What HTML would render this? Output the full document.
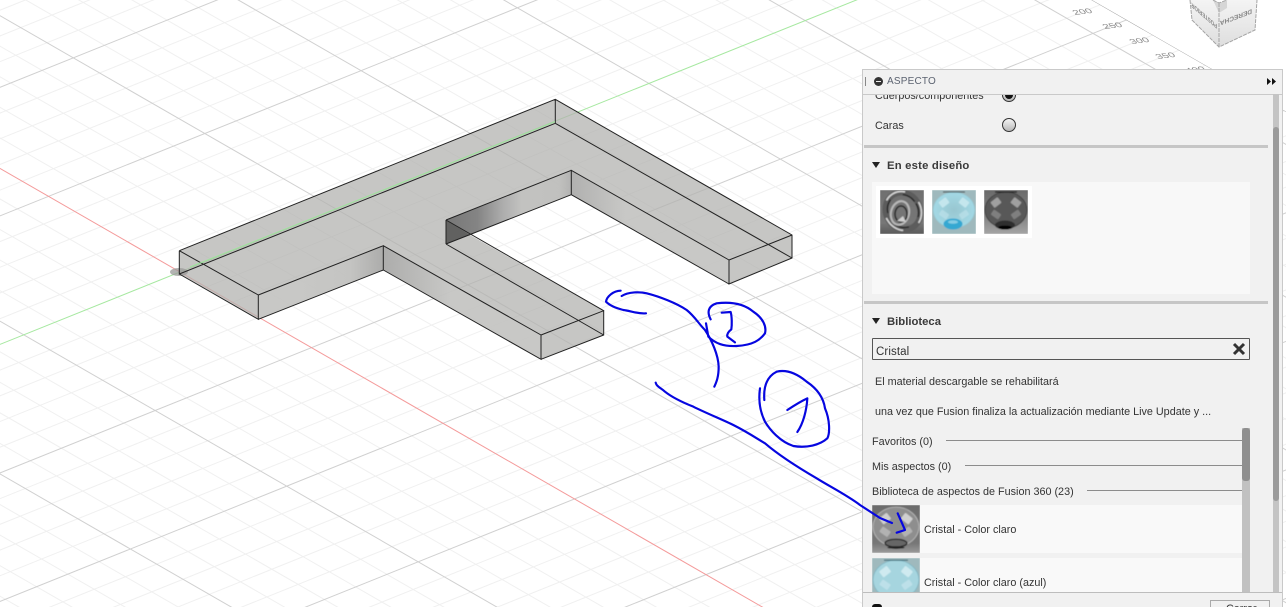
<!DOCTYPE html>
<html lang="es"><head><meta charset="utf-8"><title>ASPECTO</title>
<style>
html,body{margin:0;padding:0;width:1286px;height:607px;overflow:hidden;background:#fff;font-family:"Liberation Sans",Arial,sans-serif}
.a{position:absolute}
#stage{position:absolute;left:0;top:0;width:1286px;height:607px;overflow:hidden}
#panel{position:absolute;left:862px;top:69px;width:419px;height:537px;background:#f1f1f1;border:1px solid #c9c9c9;border-bottom:0;box-sizing:content-box;overflow:hidden}
.t{position:absolute;font-size:10.8px;line-height:12px;color:#333;white-space:nowrap}
.b{font-weight:bold;font-size:11.3px;color:#3a3a3a}
.sep{position:absolute;left:1px;width:404px;height:3px;background:#c6c6c6}
.ln{position:absolute;height:1px;background:#8c8c8c}
.radio{position:absolute;width:12px;height:12px;border:1px solid #333;border-radius:50%;background:linear-gradient(#f4f4f4,#b9b9b9)}
.tri{position:absolute;width:0;height:0;border-left:4.5px solid transparent;border-right:4.5px solid transparent;border-top:6px solid #222}
</style></head><body>
<div id="stage">
<svg class="a" style="left:0;top:0" width="1286" height="607" viewBox="0 0 1286 607">
<defs>
<clipPath id="gc"><polygon points="0,0 1092,0 1286,111.6 1286,607 0,607"/></clipPath>
<linearGradient id="w1" gradientUnits="userSpaceOnUse" x1="446" y1="0" x2="572" y2="0"><stop offset="0" stop-color="#6f6f6f"/><stop offset=".25" stop-color="#7d7d7d"/><stop offset=".45" stop-color="#aaaaaa"/><stop offset=".6" stop-color="#c2c2c0"/><stop offset=".9" stop-color="#c0c0be"/><stop offset="1" stop-color="#b0b0af"/></linearGradient>
<linearGradient id="w2" gradientUnits="userSpaceOnUse" x1="300" y1="0" x2="383" y2="0"><stop offset="0" stop-color="#c8c8c6"/><stop offset=".6" stop-color="#c4c4c2"/><stop offset="1" stop-color="#a8a8a7"/></linearGradient>
<linearGradient id="w3" gradientUnits="userSpaceOnUse" x1="383" y1="0" x2="450" y2="0"><stop offset="0" stop-color="#a8a8a7"/><stop offset="1" stop-color="#c8c8c6"/></linearGradient>
<linearGradient id="w4" gradientUnits="userSpaceOnUse" x1="572" y1="0" x2="625" y2="0"><stop offset="0" stop-color="#adadac"/><stop offset="1" stop-color="#c8c8c6"/></linearGradient>
<linearGradient id="cl" x1="0" y1="0" x2="0" y2="1"><stop offset="0" stop-color="#f4f4f4"/><stop offset="1" stop-color="#dedede"/></linearGradient>
</defs>
<g clip-path="url(#gc)" fill="none">
<g transform="matrix(26.3 15.13 31.26 -12.57 180 272)">
<path vector-effect="non-scaling-stroke" stroke="#f0f0f0" stroke-width="1" d="M-14-18V26.08M-13-18V26.08M-12-18V26.08M-11-18V26.08M-9-18V26.08M-8-18V26.08M-7-18V26.08M-6-18V26.08M-4-18V26.08M-3-18V26.08M-2-18V26.08M-1-18V26.08M1-18V26.08M2-18V26.08M3-18V26.08M4-18V26.08M6-18V26.08M7-18V26.08M8-18V26.08M9-18V26.08M11-18V26.08M12-18V26.08M13-18V26.08M14-18V26.08M16-18V26.08M17-18V26.08M18-18V26.08M19-18V26.08M21-18V26.08M22-18V26.08M23-18V26.08M24-18V26.08M26-18V26.08M27-18V26.08M28-18V26.08M29-18V26.08M31-18V26.08M-14-18H31M-14-17H31M-14-16H31M-14-14H31M-14-13H31M-14-12H31M-14-11H31M-14-9H31M-14-8H31M-14-7H31M-14-6H31M-14-4H31M-14-3H31M-14-2H31M-14-1H31M-14 1H31M-14 2H31M-14 3H31M-14 4H31M-14 6H31M-14 7H31M-14 8H31M-14 9H31M-14 11H31M-14 12H31M-14 13H31M-14 14H31M-14 16H31M-14 17H31M-14 18H31M-14 19H31M-14 21H31M-14 22H31M-14 23H31M-14 24H31"/>
<path vector-effect="non-scaling-stroke" stroke="#d0d0d0" stroke-width="1" d="M-10-18V26.08M-5-18V26.08M5-18V26.08M10-18V26.08M15-18V26.08M20-18V26.08M25-18V26.08M30-18V26.08M-14-15H31M-14-10H31M-14-5H31M-14 5H31M-14 10H31M-14 15H31M-14 20H31M-14 25H31"/>
<path vector-effect="non-scaling-stroke" stroke="#8d8d8d" stroke-width="1" d="M-14 26.08H31"/>
<path vector-effect="non-scaling-stroke" stroke="#f49a9a" stroke-width="1" d="M-14 0H31"/>
<path vector-effect="non-scaling-stroke" stroke="#a6e8a0" stroke-width="1" d="M0-18V26.08"/>
</g>
</g>
<!-- axis labels -->
<g font-family="'Liberation Sans',sans-serif" font-size="11" fill="#8c8c8c">
<text transform="matrix(1 -.12 .5 .6 1075 15)">200</text>
<text transform="matrix(1 -.12 .5 .6 1105 29)">250</text>
<text transform="matrix(1 -.12 .5 .6 1132 44)">300</text>
<text transform="matrix(1 -.12 .5 .6 1158 59)">350</text>
<text transform="matrix(1 -.12 .5 .6 1188 73)">400</text>
</g>
<!-- nav cube -->
<g>
<polygon points="1190,0 1192,20 1219,47 1219,8 1213,0" fill="url(#cl)"/>
<polygon points="1219,8 1219,47 1255,30 1257,0 1227,0" fill="url(#cl)"/>
<polygon points="1213,0 1219,3 1227,0 1227,8 1219,13" fill="#d6d6d6"/>
<path d="M1190 0L1192 20L1219 47L1255 30L1257 0M1219 3V47M1213 0L1219 3L1227 0" fill="none" stroke="#a4a4a4" stroke-width="1" stroke-dasharray="4 1"/>
<g font-family="'Liberation Sans',sans-serif" font-size="6.5" font-weight="bold" fill="#858585">
<text transform="matrix(-1 .38 0 -1 1252 9)">DERECHA</text>
<text transform="matrix(-.67 -.58 0 -1 1217 24.5)">POSTERIOR</text>
</g>
</g>
<!-- body -->
<polygon points="179.3,250.7 555.3,99.3 792,235 792,258 729,284 571.3,194.7 470,235 603.7,310.7 603.7,335 541,359.3 383.3,270 258.3,319.3 179.3,274" fill="#b2b2b0" fill-opacity=".74"/>
<polygon points="446,220 571.3,170.3 571.3,194.7 446,244" fill="url(#w1)" fill-opacity=".9"/>
<polygon points="446,220 470,235 446,244" fill="#616160"/>
<polygon points="258.3,295 383.3,245.7 383.3,270 258.3,319.3" fill="url(#w2)" fill-opacity=".85"/>
<polygon points="383.3,245.7 541,335 541,359.3 383.3,270" fill="url(#w3)" fill-opacity=".85"/>
<polygon points="571.3,170.3 729,260 729,284 571.3,194.7" fill="url(#w4)" fill-opacity=".85"/>
<ellipse cx="179" cy="272" rx="9" ry="4" fill="#9a9a98" fill-opacity=".75"/>
<path fill="none" stroke="#222" stroke-width="1" d="M179.3 250.7L555.3 99.3L792 235V258L729 284V260L792 235M729 284L571.3 194.7V170.3L729 260M555.3 99.3V123.3L792 258M179.3 250.7V274L555.3 123.3M179.3 250.7L258.3 295V319.3L179.3 274M258.3 295L383.3 245.7V270L258.3 319.3M383.3 245.7L541 335V359.3L383.3 270M541 335L603.7 310.7V335L541 359.3M446 220L603.7 310.7M446 244L603.7 335M446 220V244M446 220L571.3 170.3M446 244L571.3 194.7"/>
<line x1="190" y1="267" x2="555" y2="121.6" stroke="#9ce59a" stroke-width="1"/>
</svg>

<div id="panel">
<div class="t" style="left:12px;top:20px;">Cuerpos/componentes</div>
<div class="radio" style="left:139px;top:18px"></div>
<div class="a" style="left:142px;top:21px;width:8px;height:8px;border-radius:50%;background:#111"></div>
<div class="a" style="left:0;top:0;width:419px;height:24px;background:#f1f1f1;border-bottom:1px solid #c9c9c9"></div>
<div class="a" style="left:2px;top:7px;width:1px;height:9px;background:#888"></div>
<div class="a" style="left:11px;top:7px;width:9px;height:9px;border-radius:50%;background:#333"></div>
<div class="a" style="left:13px;top:11px;width:5px;height:1px;background:#eee"></div>
<div class="t" style="left:24px;top:6px;color:#5b6270;font-size:10px;letter-spacing:.2px;">ASPECTO</div>
<svg class="a" style="left:403px;top:7px" width="12" height="9"><path d="M1 1l4 3.5l-4 3.5zM6 1l4 3.5l-4 3.5z" fill="#111"/></svg>

<div class="t" style="left:12px;top:50px;">Caras</div>
<div class="radio" style="left:139px;top:48px"></div>
<div class="sep" style="top:75px"></div>
<div class="tri" style="left:9px;top:92px"></div>
<div class="t b" style="left:24px;top:90px;letter-spacing:.2px">En este diseño</div>
<div class="a" style="left:9px;top:112px;width:378px;height:112px;background:#f8f8f8"></div>
<div class="a" style="left:13px;top:116px;width:156px;height:52px;background:#fff"></div>
<div class="sep" style="top:231px"></div>
<div class="tri" style="left:9px;top:248px"></div>
<div class="t b" style="left:24px;top:246px;">Biblioteca</div>
<div class="a" style="left:9px;top:268px;width:376px;height:20px;border:1px solid #555;border-radius:1px"></div>
<div class="t" style="left:13px;top:276px;font-size:11.5px;letter-spacing:.1px;">Cristal</div>
<svg class="a" style="left:369px;top:272px" width="14" height="14"><path d="M2 2L12 12M12 2L2 12" stroke="#333" stroke-width="3" fill="none"/></svg>
<div class="t" style="left:12px;top:306px;">El material descargable se rehabilitará</div>
<div class="t" style="left:12px;top:336px;">una vez que Fusion finaliza la actualización mediante Live Update y ...</div>

<div class="t" style="left:9px;top:366px;">Favoritos (0)</div>
<div class="ln" style="left:83px;top:370px;width:296px"></div>
<div class="t" style="left:9px;top:391px;">Mis aspectos (0)</div>
<div class="ln" style="left:102px;top:395px;width:277px"></div>
<div class="t" style="left:9px;top:416px;">Biblioteca de aspectos de Fusion 360 (23)</div>
<div class="ln" style="left:224px;top:420px;width:155px"></div>

<div class="a" style="left:9px;top:435px;width:370px;height:48px;background:#f9f9f9"></div>
<div class="t" style="left:61px;top:454px;">Cristal - Color claro</div>
<div class="a" style="left:9px;top:488px;width:370px;height:40px;background:#f9f9f9"></div>
<div class="t" style="left:61px;top:507px;">Cristal - Color claro (azul)</div>

<div class="a" style="left:379px;top:358px;width:8px;height:164px;background:#c1c1c1"></div>
<div class="a" style="left:379px;top:358px;width:8px;height:53px;background:#8f8f8f;border-radius:3px"></div>
<div class="a" style="left:410px;top:24px;width:6px;height:500px;background:#c4c4c4"></div>
<div class="a" style="left:410px;top:57px;width:6px;height:374px;background:#9b9b9b;border-radius:3px"></div>

<div class="a" style="left:0;top:522px;width:419px;height:14px;background:#f1f1f1;border-top:1px solid #bdbdbd"></div>
<div class="a" style="left:9px;top:534px;width:10px;height:3px;border-radius:5px 5px 0 0;background:#111"></div>
<div class="a" style="left:347px;top:530px;width:58px;height:6px;border:1px solid #aaa;border-bottom:0;background:#f1f1f1"></div>
<div class="t" style="left:363px;top:533px;height:4px;overflow:hidden;">Cerrar</div>
</div>

<svg class="a" style="left:0;top:0;pointer-events:none" width="1286" height="607" viewBox="0 0 1286 607">
<defs>
<filter id="bl" x="-10%" y="-10%" width="120%" height="120%"><feGaussianBlur stdDeviation=".5"/></filter>
<radialGradient id="sb" cx=".5" cy=".5" r=".55"><stop offset="0" stop-color="#98c6d0"/><stop offset=".85" stop-color="#a3d8e4"/><stop offset="1" stop-color="#7fb7c5"/></radialGradient>
<linearGradient id="gbg" x1="0" y1="0" x2="0" y2="1"><stop offset="0" stop-color="#707070"/><stop offset=".75" stop-color="#777"/><stop offset="1" stop-color="#5a5a5a"/></linearGradient>
<linearGradient id="gbg2" x1="0" y1="0" x2="0" y2="1"><stop offset="0" stop-color="#6c6c6c"/><stop offset=".8" stop-color="#777"/><stop offset="1" stop-color="#9a9a9a"/></linearGradient>
<linearGradient id="cbg" x1="0" y1="0" x2="0" y2="1"><stop offset="0" stop-color="#6a6a6a"/><stop offset=".7" stop-color="#8a8a8a"/><stop offset="1" stop-color="#a5a5a5"/></linearGradient>
<g id="hl"><rect x="-4.5" y="-3.5" width="9" height="7" rx="1" transform="translate(12 12.5) rotate(-38)"/><rect x="-4.5" y="-3.5" width="9" height="7" rx="1" transform="translate(32 12.5) rotate(38)"/><rect x="-4.5" y="-3" width="9" height="6" rx="1" opacity=".55" transform="translate(12 24.5) rotate(35)"/><rect x="-4.5" y="-3" width="9" height="6" rx="1" opacity=".55" transform="translate(32 24.5) rotate(-35)"/></g>
<clipPath id="c1"><rect width="44" height="44"/></clipPath>
</defs>
<!-- torus -->
<g transform="translate(880 190)" clip-path="url(#c1)" filter="url(#bl)">
<rect width="44" height="44" fill="url(#gbg)"/>
<ellipse cx="23" cy="21" rx="17" ry="19" fill="none" stroke="#5c5c5c" stroke-width="6" transform="rotate(-30 23 21)"/>
<ellipse cx="23" cy="21" rx="18" ry="20" fill="none" stroke="#d8d8d8" stroke-width="1.6" stroke-dasharray="22 18" transform="rotate(-30 23 21)"/>
<ellipse cx="23" cy="21" rx="15" ry="17" fill="none" stroke="#222" stroke-width="1.4" stroke-dasharray="14 14" transform="rotate(-30 23 21)"/>
<ellipse cx="20" cy="23" rx="9" ry="12" fill="none" stroke="#b9b9b9" stroke-width="2" transform="rotate(15 20 23)"/>
<ellipse cx="21" cy="24" rx="6" ry="8" fill="#757575" stroke="#2b2b2b" stroke-width="1.6"/>
<path d="M17 31l6-5l3 6z" fill="#d0d0d0"/>
</g>
<!-- blue -->
<g transform="translate(932 190)" clip-path="url(#c1)" filter="url(#bl)">
<rect width="44" height="44" fill="#9fb9bd"/>
<ellipse cx="22" cy="20" rx="21" ry="18" fill="url(#sb)"/>
<path d="M11 2h22" stroke="#333" stroke-width="1"/>
<use href="#hl" fill="#c4e6ed"/>
<ellipse cx="21" cy="34" rx="9.5" ry="5.5" fill="#36a8d2"/>
<ellipse cx="21" cy="32" rx="5" ry="1.8" fill="#86cde4"/>
</g>
<!-- dark -->
<g transform="translate(984 190)" clip-path="url(#c1)" filter="url(#bl)">
<rect width="44" height="44" fill="url(#cbg)"/>
<ellipse cx="22" cy="20" rx="21" ry="18" fill="#585858" stroke="#3a3a3a" stroke-width=".8"/>
<path d="M11 2h22" stroke="#1a1a1a" stroke-width="1.2"/>
<use href="#hl" fill="#a0a0a0"/>
<ellipse cx="21" cy="35" rx="10" ry="4.5" fill="#2e2e2e"/>
<ellipse cx="21" cy="37.5" rx="7" ry="2" fill="#050505"/>
</g>
<!-- clear row -->
<g transform="translate(872 505) scale(1.09)" clip-path="url(#c1)" filter="url(#bl)">
<rect width="44" height="44" fill="url(#gbg2)"/>
<ellipse cx="22" cy="20" rx="21" ry="18" fill="#8e8e8e" stroke="#bbb" stroke-width=".7"/>
<use href="#hl" fill="#cfcfcf"/>
<ellipse cx="22" cy="35" rx="10" ry="3.6" fill="#666" stroke="#222" stroke-width="1.2"/>
<ellipse cx="22" cy="39" rx="8" ry="1.2" fill="#222"/>
</g>
<!-- blue row -->
<svg x="872" y="558" width="48" height="34" viewBox="0 0 48 34">
<g transform="scale(1.09)" filter="url(#bl)">
<rect width="44" height="44" fill="#9fb9bd"/>
<ellipse cx="22" cy="20" rx="21" ry="18" fill="#a6d5df" stroke="#80b5c3" stroke-width=".7"/>
<path d="M11 2h22" stroke="#3f6d78" stroke-width="1"/>
<use href="#hl" fill="#cfeaf0"/>
<ellipse cx="22" cy="36" rx="10" ry="4" fill="#58b8d6"/>
</g>
</svg>
<!-- blue ink -->
<g transform="translate(590 280) scale(.33333)" fill="none" stroke="#0606e0" stroke-width="6.5" stroke-linecap="round" stroke-linejoin="round">
<path d="M92 32C70 32 50 50 48 65C60 78 80 85 100 90C120 92 140 102 168 100"/>
<path d="M95 48C115 35 150 35 170 40C210 50 260 70 290 90C315 110 325 130 345 150C365 180 385 225 386 260C386 290 380 305 373 320"/>
<path d="M362 118C350 95 355 78 380 70C420 65 460 70 490 95C520 115 530 140 525 160C510 180 490 195 440 198C400 200 375 190 355 170L348 130"/>
<path d="M395 98L422 96C426 110 426 135 424 148C415 155 410 162 412 170L435 187"/>
<path d="M197 308C200 320 210 322 225 335C250 355 280 368 310 380C350 400 400 420 430 435C470 455 500 475 525 490C560 520 620 560 680 595C720 620 770 645 810 675L870 714L906 729"/>
<path d="M523 360C520 320 530 290 560 275C590 268 620 280 650 305C680 325 700 350 705 385C720 420 720 460 712 475C690 495 650 505 610 498C570 485 540 450 525 425C510 395 505 360 510 325"/>
<path d="M592 390C610 378 630 365 652 355C650 390 640 430 622 456"/>
<path d="M923 700L945 750L920 758"/>
</g>
</svg>
</div>
</body></html>
